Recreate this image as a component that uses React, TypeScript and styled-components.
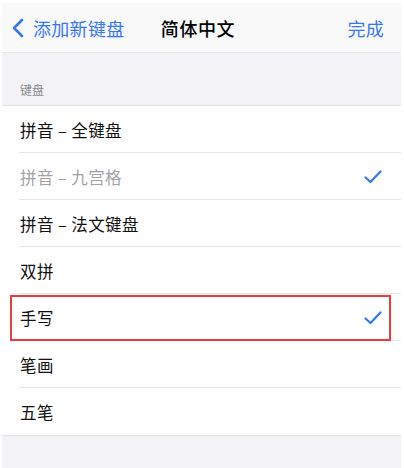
import styled, { createGlobalStyle } from "styled-components";

const GlobalStyle = createGlobalStyle`
  html, body {
    margin: 0;
    padding: 0;
    background: #ffffff;
  }
  body {
    font-family: "Noto Sans CJK SC", "Noto Sans", sans-serif;
    -webkit-font-smoothing: antialiased;
  }
`;

const Page = styled.div`
  width: 404px;
  height: 468px;
  padding: 3px 3px 0 2px;
  box-sizing: border-box;
  overflow: hidden;
`;

const Screen = styled.div`
  display: flex;
  flex-direction: column;
  height: 465px;
  background: #f2f2f7;
  border-radius: 4px 4px 0 0;
  overflow: hidden;
`;

const NavBar = styled.div`
  height: 49px;
  display: grid;
  grid-template-columns: 1fr auto 1fr;
  align-items: center;
  background: #f9f9fa;
  border-bottom: 1px solid #e4e4e8;
  padding: 0 17px 0 10px;
`;

const BackButton = styled.div`
  display: flex;
  align-items: center;
  gap: 9px;
  color: #3478f6;
  font-size: 18px;
  letter-spacing: 0.3px;
  justify-self: start;
`;

const Title = styled.div`
  font-size: 18px;
  font-weight: 500;
  color: #000;
  letter-spacing: 0.6px;
`;

const Done = styled.div`
  justify-self: end;
  color: #3478f6;
  font-size: 18px;
  letter-spacing: 0.3px;
`;

const SectionHeader = styled.div`
  height: 52px;
  display: flex;
  align-items: flex-end;
  padding: 0 0 7px 18px;
  box-sizing: border-box;
  font-size: 12px;
  color: #8a8a8e;
`;

const List = styled.div`
  background: #fff;
  border-top: 1px solid #e4e4e8;
  border-bottom: 1px solid #e4e4e8;
`;

const Row = styled.div<{ $marked?: boolean }>`
  position: relative;
  height: 47px;
  display: flex;
  align-items: center;
  justify-content: space-between;
  padding: 0 19px 0 18px;
  box-sizing: border-box;
  &:not(:last-child)::before {
    content: "";
    position: absolute;
    left: 17px;
    right: 0;
    bottom: 0;
    height: 1px;
    background: #e6e6ea;
  }
  ${(p) =>
    p.$marked &&
    `
    &::after {
      content: "";
      position: absolute;
      left: 8px;
      right: 10px;
      top: 1px;
      bottom: 0px;
      border: 2px solid #ef3b3b;
    }
  `}
`;

const Label = styled.span<{ $dim?: boolean }>`
  font-size: 16.5px;
  color: ${(p) => (p.$dim ? "#a2a2a6" : "#111")};
  letter-spacing: 0.4px;
`;

const Check = () => (
  <svg width="18" height="14" viewBox="0 0 18 14">
    <polyline
      points="1.5,7.5 6.5,12 16.5,1.5"
      fill="none"
      stroke="#3478f6"
      strokeWidth="2.2"
      strokeLinecap="round"
      strokeLinejoin="round"
    />
  </svg>
);

const Chevron = () => (
  <svg width="12" height="20" viewBox="0 0 12 20">
    <polyline
      points="10,2 2,10 10,18"
      fill="none"
      stroke="#3478f6"
      strokeWidth="2.6"
      strokeLinecap="round"
      strokeLinejoin="round"
    />
  </svg>
);

const items = [
  { name: "拼音 – 全键盘" },
  { name: "拼音 – 九宫格", dim: true, checked: true },
  { name: "拼音 – 法文键盘" },
  { name: "双拼" },
  { name: "手写", checked: true, marked: true },
  { name: "笔画" },
  { name: "五笔" },
];

export default function App() {
  return (
    <>
      <GlobalStyle />
      <Page>
        <Screen>
          <NavBar>
            <BackButton>
              <Chevron />
              <span>添加新键盘</span>
            </BackButton>
            <Title>简体中文</Title>
            <Done>完成</Done>
          </NavBar>
          <SectionHeader>键盘</SectionHeader>
          <List>
            {items.map((item) => (
              <Row key={item.name} $marked={item.marked}>
                <Label $dim={item.dim}>{item.name}</Label>
                {item.checked && <Check />}
              </Row>
            ))}
          </List>
        </Screen>
      </Page>
    </>
  );
}
